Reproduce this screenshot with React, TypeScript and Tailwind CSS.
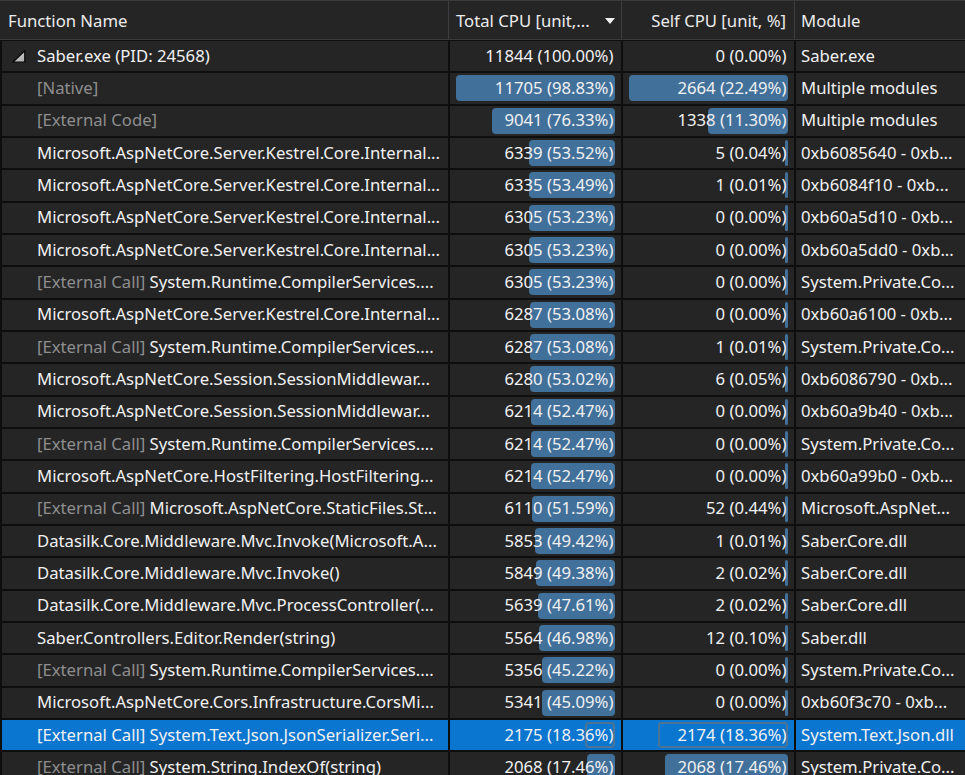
import React from "react";

type Row = {
  name: string;
  prefix?: string;
  gray?: boolean;
  total: number;
  totalPct: string;
  self: number;
  selfPct: string;
  module: string;
  root?: boolean;
  selected?: boolean;
};

const K = "Microsoft.AspNetCore.Server.Kestrel.Core.Internal...";
const RCS = "System.Runtime.CompilerServices....";
const EC = "[External Call]";

const rows: Row[] = [
  { name: "Saber.exe (PID: 24568)", total: 11844, totalPct: "100.00%", self: 0, selfPct: "0.00%", module: "Saber.exe", root: true },
  { name: "[Native]", gray: true, total: 11705, totalPct: "98.83%", self: 2664, selfPct: "22.49%", module: "Multiple modules" },
  { name: "[External Code]", gray: true, total: 9041, totalPct: "76.33%", self: 1338, selfPct: "11.30%", module: "Multiple modules" },
  { name: K, total: 6339, totalPct: "53.52%", self: 5, selfPct: "0.04%", module: "0xb6085640 - 0xb..." },
  { name: K, total: 6335, totalPct: "53.49%", self: 1, selfPct: "0.01%", module: "0xb6084f10 - 0xb..." },
  { name: K, total: 6305, totalPct: "53.23%", self: 0, selfPct: "0.00%", module: "0xb60a5d10 - 0xb..." },
  { name: K, total: 6305, totalPct: "53.23%", self: 0, selfPct: "0.00%", module: "0xb60a5dd0 - 0xb..." },
  { prefix: EC, name: RCS, total: 6305, totalPct: "53.23%", self: 0, selfPct: "0.00%", module: "System.Private.Co..." },
  { name: K, total: 6287, totalPct: "53.08%", self: 0, selfPct: "0.00%", module: "0xb60a6100 - 0xb..." },
  { prefix: EC, name: RCS, total: 6287, totalPct: "53.08%", self: 1, selfPct: "0.01%", module: "System.Private.Co..." },
  { name: "Microsoft.AspNetCore.Session.SessionMiddlewar...", total: 6280, totalPct: "53.02%", self: 6, selfPct: "0.05%", module: "0xb6086790 - 0xb..." },
  { name: "Microsoft.AspNetCore.Session.SessionMiddlewar...", total: 6214, totalPct: "52.47%", self: 0, selfPct: "0.00%", module: "0xb60a9b40 - 0xb..." },
  { prefix: EC, name: RCS, total: 6214, totalPct: "52.47%", self: 0, selfPct: "0.00%", module: "System.Private.Co..." },
  { name: "Microsoft.AspNetCore.HostFiltering.HostFiltering...", total: 6214, totalPct: "52.47%", self: 0, selfPct: "0.00%", module: "0xb60a99b0 - 0xb..." },
  { prefix: EC, name: "Microsoft.AspNetCore.StaticFiles.St...", total: 6110, totalPct: "51.59%", self: 52, selfPct: "0.44%", module: "Microsoft.AspNet..." },
  { name: "Datasilk.Core.Middleware.Mvc.Invoke(Microsoft.A...", total: 5853, totalPct: "49.42%", self: 1, selfPct: "0.01%", module: "Saber.Core.dll" },
  { name: "Datasilk.Core.Middleware.Mvc.Invoke()", total: 5849, totalPct: "49.38%", self: 2, selfPct: "0.02%", module: "Saber.Core.dll" },
  { name: "Datasilk.Core.Middleware.Mvc.ProcessController(...", total: 5639, totalPct: "47.61%", self: 2, selfPct: "0.02%", module: "Saber.Core.dll" },
  { name: "Saber.Controllers.Editor.Render(string)", total: 5564, totalPct: "46.98%", self: 12, selfPct: "0.10%", module: "Saber.dll" },
  { prefix: EC, name: RCS, total: 5356, totalPct: "45.22%", self: 0, selfPct: "0.00%", module: "System.Private.Co..." },
  { name: "Microsoft.AspNetCore.Cors.Infrastructure.CorsMi...", total: 5341, totalPct: "45.09%", self: 0, selfPct: "0.00%", module: "0xb60f3c70 - 0xb..." },
  { prefix: EC, name: "System.Text.Json.JsonSerializer.Seri...", total: 2175, totalPct: "18.36%", self: 2174, selfPct: "18.36%", module: "System.Text.Json.dll", selected: true },
  { prefix: EC, name: "System.String.IndexOf(string)", total: 2068, totalPct: "17.46%", self: 2068, selfPct: "17.46%", module: "System.Private.Co..." },
];

const MAXW = 159;

function BarCell({ value, pct, width, show, selected }: { value: number; pct: string; width: number; show: boolean; selected?: boolean }) {
  return (
    <div className={`grid items-center pr-[6px] ${selected ? "bg-[#0a76d0]" : "bg-[#252526]"}`}>
      {show && (
        <div
          className={`col-start-1 row-start-1 justify-self-end h-[26px] rounded-[4px] ${
            selected ? "border-2 border-[#4c7494]" : "bg-[#41709a]"
          }`}
          style={{ width: `${width}px` }}
        />
      )}
      <div className="col-start-1 row-start-1 justify-self-end pr-[1.5px] text-[#f1f1f1] whitespace-nowrap">
        {value} ({pct})
      </div>
    </div>
  );
}

function Tri() {
  return (
    <svg width="14" height="13" viewBox="0 0 14 13">
      <defs>
        <linearGradient id="tg" x1="0" y1="0" x2="1" y2="1">
          <stop offset="0" stopColor="#e2e2e2" />
          <stop offset="1" stopColor="#a6a6a6" />
        </linearGradient>
      </defs>
      <polygon points="12.8,0.8 12.8,12.2 0.8,12.2" fill="url(#tg)" stroke="#0a0a0a" strokeWidth="1.3" strokeLinejoin="round" />
    </svg>
  );
}

export default function App() {
  return (
    <div
      className="w-[965px] h-[775px] overflow-hidden bg-[#0e0e0e] text-[16.7px] leading-none"
      style={{ fontFamily: '"Noto Sans", "Open Sans", sans-serif' }}
    >
      {/* header */}
      <div className="grid grid-cols-[449px_173px_173px_1fr] h-[40px] bg-[#252526] border-t border-b border-[#3b3b3d] text-[#ececec]">
        <div className="flex items-center pt-[2px] pl-[8px] border-r border-[#3f3f42]">Function Name</div>
        <div className="flex items-center justify-between pt-[2px] pl-[7px] pr-[6px] border-r border-[#3f3f42]">
          <span>Total CPU [unit,...</span>
          <svg width="10" height="6" viewBox="0 0 10 6">
            <polygon points="0,0 10,0 5,6" fill="#f0f0f0" />
          </svg>
        </div>
        <div className="flex items-center justify-end pt-[2px] pr-[8px] border-r border-[#3f3f42]">Self CPU [unit, %]</div>
        <div className="flex items-center pt-[2px] pl-[6px]">Module</div>
      </div>

      {/* body */}
      <div className="flex flex-col gap-[2px] pt-[1px]">
        {rows.map((r, i) => {
          const sel = !!r.selected;
          const cellBg = sel ? "bg-[#0a76d0]" : "bg-[#252526]";
          const tw = Math.min(MAXW, (parseFloat(r.totalPct) / 100) * 161);
          const sw = Math.max(3, (r.self / 2664) * MAXW);
          return (
            <div key={i} className="grid grid-cols-[446px_171px_171px_1fr] gap-x-[2px] pl-[2px] h-[30.33px] shrink-0">
              <div className={`flex items-center pl-[10px] overflow-hidden whitespace-nowrap ${cellBg}`}>
                <div className="w-[25px] shrink-0 flex items-center">{r.root && <Tri />}</div>
                {r.prefix ? (
                  <span className="text-[#f1f1f1]">
                    <span className={sel ? "text-[#f1f1f1]" : "text-[#8e8e8e]"}>{r.prefix}</span> {r.name}
                  </span>
                ) : (
                  <span className={r.gray ? "text-[#8e8e8e]" : "text-[#f1f1f1]"}>{r.name}</span>
                )}
              </div>
              <BarCell value={r.total} pct={r.totalPct} width={tw} show={!r.root} selected={sel} />
              <BarCell value={r.self} pct={r.selfPct} width={sw} show={!r.root} selected={sel} />
              <div className={`flex items-center pl-[5px] whitespace-nowrap overflow-hidden text-[#f1f1f1] ${cellBg}`}>
                {r.module}
              </div>
            </div>
          );
        })}
      </div>
    </div>
  );
}
